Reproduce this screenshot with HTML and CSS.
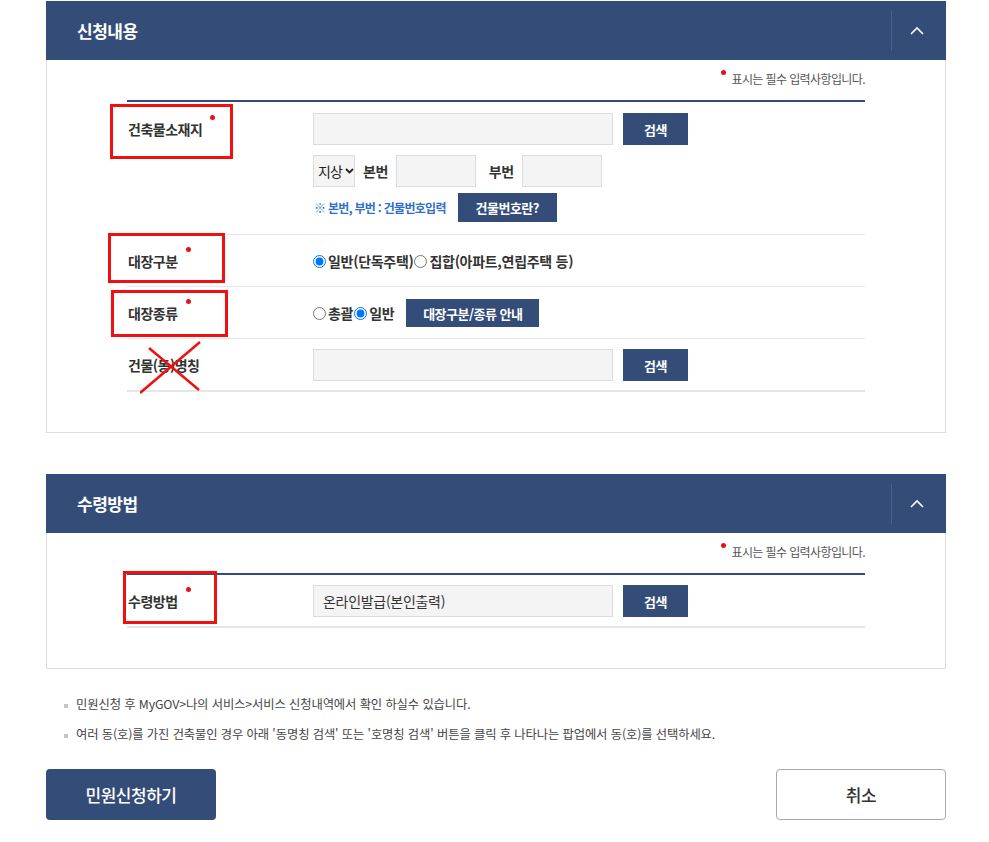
FILE: index.html
```html
<!DOCTYPE html>
<html lang="ko">
<head>
    <meta charset="UTF-8">
    <meta name="viewport" content="width=device-width, initial-scale=1.0">
    <title>건축물대장 발급 신청</title>
    <link rel="stylesheet" href="styles.css">
</head>
<body>

<div class="wrap">

    <!-- 신청내용 -->
    <section class="panel">
        <div class="panel-head">
            <h2>신청내용</h2>
            <button class="toggle" type="button" aria-label="접기">
                <svg width="14" height="9" viewBox="0 0 14 9"><polyline points="1,8 7,2 13,8" fill="none" stroke="#fff" stroke-width="1.6"/></svg>
            </button>
        </div>
        <div class="panel-body">
            <p class="req-note"><span class="dot"></span>표시는 필수 입력사항입니다.</p>
            <div class="form-table">
                <div class="row row-tall">
                    <div class="th">건축물소재지<span class="dot"></span></div>
                    <div class="td stack">
                        <div class="line">
                            <input type="text" class="txt wide">
                            <button type="button" class="btn-sm">검색</button>
                        </div>
                        <div class="line">
                            <span class="sel">
                                <select><option>지상</option><option>지하</option></select>
                                <svg width="9" height="6" viewBox="0 0 9 6"><polyline points="1,1 4.5,4.5 8,1" fill="none" stroke="#222" stroke-width="1.8"/></svg>
                            </span>
                            <span class="lbl">본번</span>
                            <input type="text" class="txt short">
                            <span class="lbl lbl-gap">부번</span>
                            <input type="text" class="txt short">
                        </div>
                        <div class="line">
                            <span class="hint">※ 본번, 부번 : 건물번호입력</span>
                            <button type="button" class="btn-sm btn-help">건물번호란?</button>
                        </div>
                    </div>
                </div>
                <div class="row">
                    <div class="th">대장구분<span class="dot"></span></div>
                    <div class="td">
                        <label class="radio"><input type="radio" name="kind" checked>일반(단독주택)</label>
                        <label class="radio"><input type="radio" name="kind">집합(아파트,연립주택 등)</label>
                    </div>
                </div>
                <div class="row">
                    <div class="th">대장종류<span class="dot"></span></div>
                    <div class="td">
                        <label class="radio"><input type="radio" name="type">총괄</label>
                        <label class="radio"><input type="radio" name="type" checked>일반</label>
                        <button type="button" class="btn-sm btn-guide">대장구분/종류 안내</button>
                    </div>
                </div>
                <div class="row">
                    <div class="th">건물(동)명칭</div>
                    <div class="td">
                        <input type="text" class="txt wide">
                        <button type="button" class="btn-sm">검색</button>
                    </div>
                </div>
            </div>
        </div>
    </section>

    <!-- 수령방법 -->
    <section class="panel panel-next">
        <div class="panel-head">
            <h2>수령방법</h2>
            <button class="toggle" type="button" aria-label="접기">
                <svg width="14" height="9" viewBox="0 0 14 9"><polyline points="1,8 7,2 13,8" fill="none" stroke="#fff" stroke-width="1.6"/></svg>
            </button>
        </div>
        <div class="panel-body">
            <p class="req-note"><span class="dot"></span>표시는 필수 입력사항입니다.</p>
            <div class="form-table">
                <div class="row">
                    <div class="th">수령방법<span class="dot"></span></div>
                    <div class="td">
                        <input type="text" class="txt wide" value="온라인발급(본인출력)" readonly>
                        <button type="button" class="btn-sm">검색</button>
                    </div>
                </div>
            </div>
        </div>
    </section>

    <ul class="notes">
        <li>민원신청 후 MyGOV&gt;나의 서비스&gt;서비스 신청내역에서 확인 하실수 있습니다.</li>
        <li>여러 동(호)를 가진 건축물인 경우 아래 '동명칭 검색' 또는 '호명칭 검색' 버튼을 클릭 후 나타나는 팝업에서 동(호)를 선택하세요.</li>
    </ul>

    <div class="actions">
        <button type="button" class="btn-lg btn-submit">민원신청하기</button>
        <button type="button" class="btn-lg btn-cancel">취소</button>
    </div>

    <!-- review marks drawn over the form -->
    <div class="mark mark-1"></div>
    <div class="mark mark-2"></div>
    <div class="mark mark-3"></div>
    <div class="mark mark-4"></div>
    <svg class="cross" width="62" height="56" viewBox="0 0 62 56">
        <line x1="0" y1="53" x2="60" y2="2" stroke="#f01010" stroke-width="2.5"/>
        <line x1="9" y1="8" x2="59" y2="50" stroke="#f01010" stroke-width="2.5"/>
    </svg>

</div>

</body>
</html>
```

FILE: styles.css
```css
body {
    margin: 0;
    background: #fff;
    color: #333;
    font-family: "Noto Sans CJK KR", "Noto Sans", sans-serif;
}
.wrap {
    position: relative;
    width: 900px;
    margin-left: 46px;
    padding-top: 1px;
}

/* panel */
.panel-next {
    margin-top: 41px;
}
.panel-head {
    display: flex;
    align-items: center;
    height: 59px;
    padding-left: 31px;
    background: #344c78;
}
.panel-head h2 {
    flex: 1;
    margin: 0;
    font-size: 17px;
    font-weight: 700;
    color: #fff;
    letter-spacing: -0.5px;
}
.toggle {
    display: flex;
    align-items: center;
    justify-content: center;
    width: 55px;
    height: 40px;
    padding: 0 4px 0 0;
    border: 0;
    border-left: 1px solid rgba(255, 255, 255, 0.12);
    background: none;
    cursor: pointer;
}
.panel-body {
    border: 1px solid #ddd;
    border-top: 0;
    padding: 9px 80px 40px;
}
.req-note {
    margin: 0 0 11px;
    text-align: right;
    font-size: 12px;
    line-height: 20px;
    color: #555;
    letter-spacing: -0.6px;
}
.req-note .dot {
    margin: 0 5px 0 0;
    vertical-align: 9px;
}
.dot {
    display: inline-block;
    width: 5px;
    height: 5px;
    margin-left: 8px;
    border-radius: 50%;
    background: #e8101a;
    vertical-align: 15px;
}

/* form table */
.form-table {
    border-top: 2px solid #344c78;
    border-bottom: 1px solid #e6e6e6;
}
.row {
    display: flex;
    padding: 10px 0 9px;
    border-bottom: 1px solid #e6e6e6;
}
.row-tall {
    padding: 11px 0 12px;
}
.th {
    width: 185px;
    flex-shrink: 0;
    padding-left: 1px;
    font-size: 14px;
    font-weight: 700;
    line-height: 32px;
    letter-spacing: -0.5px;
    color: #333;
}
.td {
    display: flex;
    align-items: center;
    min-height: 32px;
}
.stack {
    flex-direction: column;
    align-items: flex-start;
}
.line {
    display: flex;
    align-items: center;
}
.line + .line {
    margin-top: 10px;
}
.line:last-child {
    margin-top: 6px;
}
.txt {
    box-sizing: border-box;
    height: 32px;
    padding: 0 9px;
    border: 1px solid #dcdcdc;
    background: #f4f4f4;
    font-family: inherit;
    font-size: 14px;
    color: #333;
    letter-spacing: -0.3px;
}
.wide {
    width: 300px;
}
.short {
    width: 80px;
}
.sel {
    display: flex;
    align-items: center;
    box-sizing: border-box;
    width: 42px;
    height: 32px;
    padding-left: 4px;
    border: 1px solid #dcdcdc;
    background: #f4f4f4;
}
.sel select {
    appearance: none;
    width: 27px;
    padding: 0;
    border: 0;
    background: none;
    font-family: inherit;
    font-size: 14px;
    color: #222;
    letter-spacing: -0.8px;
}
.lbl {
    margin: 0 8px;
    font-size: 14px;
    font-weight: 700;
    letter-spacing: -0.5px;
}
.lbl-gap {
    margin-left: 13px;
}
.hint {
    margin-left: 1px;
    font-size: 12px;
    font-weight: 700;
    color: #2f70c6;
    letter-spacing: -0.7px;
}
.radio {
    display: flex;
    align-items: center;
    font-size: 14px;
    font-weight: 700;
    letter-spacing: -0.3px;
    color: #333;
}
.radio input {
    width: 13px;
    height: 13px;
    margin: 0 2px 0 1px;
}
.radio:first-child input {
    margin-left: 0;
}

/* buttons */
.btn-sm {
    height: 32px;
    width: 65px;
    margin-left: 10px;
    padding: 0;
    border: 0;
    background: #344c78;
    color: #fff;
    font-family: inherit;
    font-size: 13px;
    font-weight: 700;
    letter-spacing: -0.5px;
    cursor: pointer;
}
.btn-help {
    width: 99px;
    height: 29px;
    margin-left: 12px;
}
.btn-guide {
    width: 133px;
    height: 28px;
    margin-left: 12px;
}

/* notes */
.notes {
    margin: 25px 0 0;
    padding: 0 0 0 18px;
    list-style: none;
    font-size: 12.3px;
    line-height: 20px;
    color: #444;
    letter-spacing: -0.1px;
}
.notes li {
    margin-bottom: 10px;
}
.notes li::before {
    content: "";
    display: inline-block;
    width: 4px;
    height: 4px;
    margin-right: 8px;
    background: #c4c4c4;
    vertical-align: middle;
}

.actions {
    display: flex;
    justify-content: space-between;
    margin-top: 25px;
    padding-bottom: 22px;
}
.btn-lg {
    width: 170px;
    height: 51px;
    border-radius: 4px;
    font-family: inherit;
    font-size: 17px;
    font-weight: 500;
    letter-spacing: -0.5px;
    cursor: pointer;
}
.btn-submit {
    border: 0;
    background: #344c78;
    color: #fff;
}
.btn-cancel {
    border: 1px solid #aaa;
    background: #fff;
    color: #333;
}

/* review marks */
.mark {
    position: absolute;
    box-sizing: border-box;
    border: 3px solid #f01010;
}
.mark-1 { left: 64px; top: 104px; width: 123px; height: 55px; }
.mark-2 { left: 62px; top: 233px; width: 117px; height: 50px; }
.mark-3 { left: 65px; top: 290px; width: 117px; height: 47px; }
.mark-4 { left: 77px; top: 571px; width: 94px; height: 53px; }
.cross {
    position: absolute;
    left: 94px;
    top: 340px;
}
```
